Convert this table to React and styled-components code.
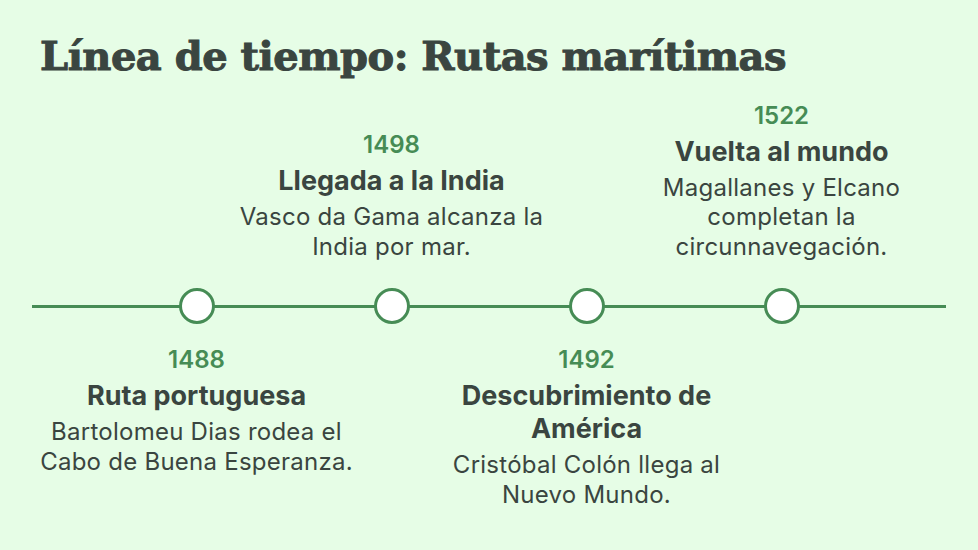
import styled, { createGlobalStyle } from "styled-components";

const GlobalStyle = createGlobalStyle`
  html, body {
    margin: 0;
    padding: 0;
    background: #e6fde6;
  }
  body {
    font-family: Inter, "Noto Sans", sans-serif;
    color: #3a4540;
  }
`;

const Page = styled.div`
  width: 978px;
  height: 550px;
  box-sizing: border-box;
  padding: 30px 32px 0;
  overflow: hidden;
`;

const Title = styled.h1`
  margin: 0 0 0 8px;
  font-family: "DejaVu Serif", serif;
  font-weight: 700;
  font-size: 40px;
  line-height: 52px;
  letter-spacing: -0.5px;
  color: #3a4540;
  -webkit-text-stroke: 1px #3a4540;
`;

const Timeline = styled.div`
  display: grid;
  grid-template-columns: 1fr repeat(4, 195px) 1fr;
  grid-template-rows: 190px 36px auto;
  margin-top: 16px;
`;

const Rail = styled.div`
  grid-column: 1 / -1;
  grid-row: 2;
  display: grid;
  grid-template-columns: subgrid;
  background: linear-gradient(#468c55, #468c55) center / 100% 3px no-repeat;
`;

const Dot = styled.div`
  grid-column: ${({ $col }) => $col + 1};
  justify-self: center;
  width: 36px;
  height: 36px;
  box-sizing: border-box;
  border: 3px solid #468c55;
  border-radius: 50%;
  background: #ffffff;
`;

const Event = styled.div`
  grid-column: ${({ $col }) => $col + 1};
  grid-row: ${({ $below }) => ($below ? 3 : 1)};
  align-self: ${({ $below }) => ($below ? "start" : "end")};
  margin: 0 -65px;
  padding: ${({ $below }) => ($below ? "22px 0 0" : "0 0 27px")};
  text-align: center;
`;

const Year = styled.div`
  font-size: 24px;
  font-weight: 600;
  line-height: 28px;
  color: #468c55;
  margin-bottom: 5px;
`;

const Heading = styled.div`
  font-size: 27px;
  font-weight: 700;
  line-height: 33px;
  color: #3a4540;
  margin-bottom: 5px;
`;

const Text = styled.div`
  font-size: 24px;
  font-weight: 400;
  line-height: 29.5px;
  letter-spacing: 0.25px;
  color: #3a4540;
`;

const events = [
  {
    year: "1488",
    title: "Ruta portuguesa",
    text: "Bartolomeu Dias rodea el Cabo de Buena Esperanza.",
    below: true,
  },
  {
    year: "1498",
    title: "Llegada a la India",
    text: "Vasco da Gama alcanza la India por mar.",
    below: false,
  },
  {
    year: "1492",
    title: "Descubrimiento de América",
    text: "Cristóbal Colón llega al Nuevo Mundo.",
    below: true,
  },
  {
    year: "1522",
    title: "Vuelta al mundo",
    text: "Magallanes y Elcano completan la circunnavegación.",
    below: false,
  },
];

export default function App() {
  return (
    <>
      <GlobalStyle />
      <Page>
        <Title>Línea de tiempo: Rutas marítimas</Title>
        <Timeline>
          {events.map((ev, i) => (
            <Event key={ev.year} $col={i + 1} $below={ev.below}>
              <Year>{ev.year}</Year>
              <Heading>{ev.title}</Heading>
              <Text>{ev.text}</Text>
            </Event>
          ))}
          <Rail>
            {events.map((ev, i) => (
              <Dot key={ev.year} $col={i + 1} />
            ))}
          </Rail>
        </Timeline>
      </Page>
    </>
  );
}
